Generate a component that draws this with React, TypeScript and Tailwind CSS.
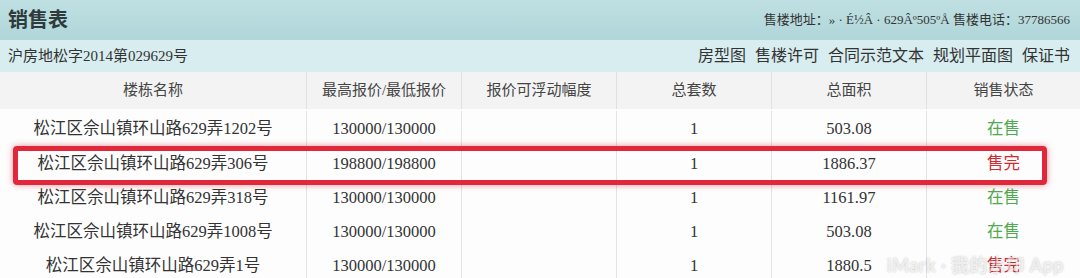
import React from 'react';

const rows = [
  { name: '松江区佘山镇环山路629弄1202号', price: '130000/130000', sets: '1', area: '503.08', sold: false },
  { name: '松江区佘山镇环山路629弄306号', price: '198800/198800', sets: '1', area: '1886.37', sold: true },
  { name: '松江区佘山镇环山路629弄318号', price: '130000/130000', sets: '1', area: '1161.97', sold: false },
  { name: '松江区佘山镇环山路629弄1008号', price: '130000/130000', sets: '1', area: '503.08', sold: false },
  { name: '松江区佘山镇环山路629弄1号', price: '130000/130000', sets: '1', area: '1880.5', sold: true },
];

const heads = ['楼栋名称', '最高报价/最低报价', '报价可浮动幅度', '总套数', '总面积', '销售状态'];
const cols = 'grid grid-cols-[306px_155px_155px_155px_155px_1fr]';

const App: React.FC = () => {
  return (
    <div
      className="relative w-[1080px] h-[278px] overflow-hidden bg-white text-[#333]"
      style={{ fontFamily: '"Liberation Serif", "Noto Sans CJK SC", serif' }}
    >
      <div className="h-[40px] flex items-center justify-between px-2 bg-gradient-to-b from-[#bfe0e2] to-[#b0d6d9]">
        <h1 className="text-[20px] font-bold text-[#2e3a3b]">销售表</h1>
        <div className="text-[13px] text-[#333] pr-[2px]">
          售楼地址：» · É½Â · 629Âº505ºÅ 售楼电话：37786566
        </div>
      </div>
      <div className="h-[32px] flex items-center justify-between px-2 bg-[#d8edef]">
        <div className="text-[15px]">沪房地松字2014第029629号</div>
        <div className="flex gap-[9px] text-[16px] pr-[2px]">
          <span>房型图</span>
          <span>售楼许可</span>
          <span>合同示范文本</span>
          <span>规划平面图</span>
          <span>保证书</span>
        </div>
      </div>
      <div className={`${cols} h-[37px] bg-[#f3f3f3] text-[15px] text-[#444]`}>
        {heads.map((h, i) => (
          <div key={h} className={`flex items-center justify-center ${i > 0 ? 'border-l border-[#e0e0e0]' : ''}`}>
            {h}
          </div>
        ))}
      </div>
      {rows.map((r, idx) => (
        <div
          key={idx}
          className={`${cols} ${idx === 0 ? 'h-[38px] pt-[2px]' : 'h-[34px]'} text-[16.5px] bg-[#fdfdfd]`}
        >
          <div className="flex items-center justify-center">{r.name}</div>
          <div className="flex items-center justify-center border-l border-[#e3e3e3]">{r.price}</div>
          <div className="border-l border-[#e3e3e3]" />
          <div className="flex items-center justify-center border-l border-[#e3e3e3]">{r.sets}</div>
          <div className="flex items-center justify-center border-l border-[#e3e3e3]">{r.area}</div>
          <div className={`flex items-center justify-center border-l border-[#e3e3e3] ${r.sold ? 'text-[#d42a2e]' : 'text-[#4fa94f]'}`}>
            {r.sold ? '售完' : '在售'}
          </div>
        </div>
      ))}
      <div className="absolute left-[13px] top-[146px] w-[1034px] h-[39px] rounded-[4px] border-[5px] border-[#e0283a] shadow-[0_0_6px_rgba(224,40,58,0.5)]" />
      <div
        className="absolute right-[16px] top-[252px] text-[18px] font-bold text-white/70 tracking-wide opacity-80 [text-shadow:0_0_2px_rgba(0,0,0,0.3)]"
        style={{ fontFamily: 'Lato, "Noto Sans CJK SC", sans-serif' }}
      >
        iMark · 我的水印 App
      </div>
    </div>
  );
};

export default App;
